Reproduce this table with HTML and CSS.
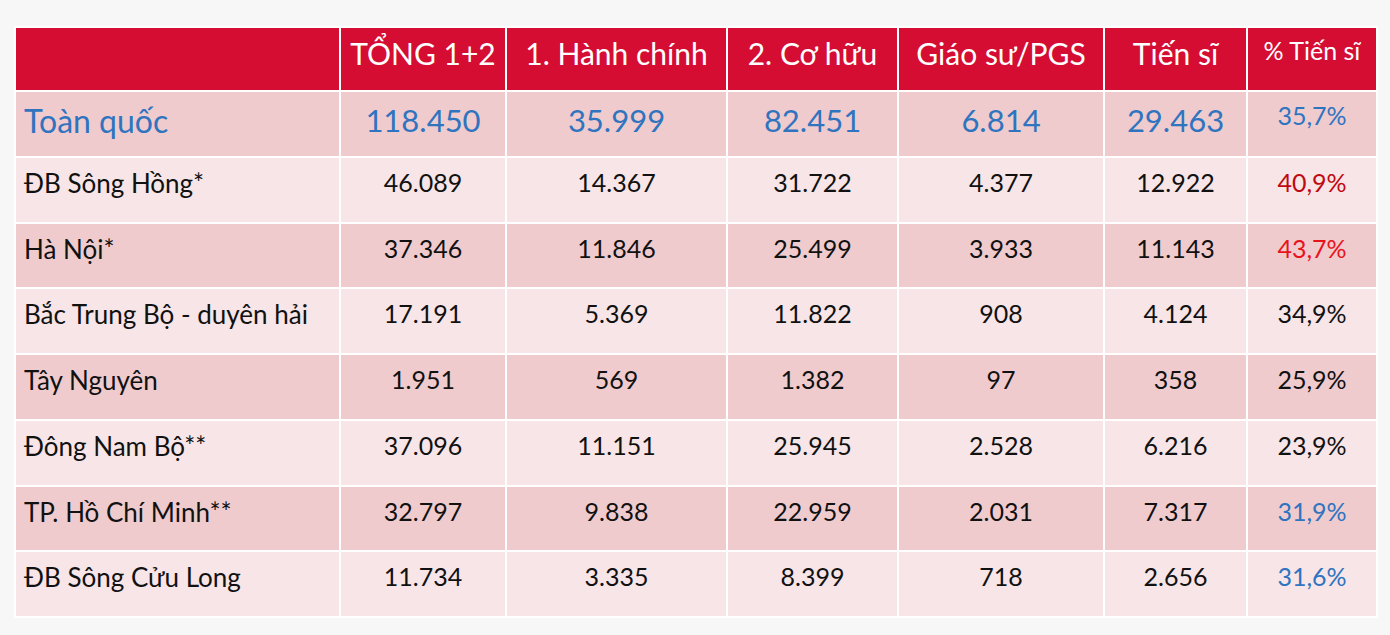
FILE: index.html
```html
<!DOCTYPE html>
<html lang="vi">
<head>
<meta charset="utf-8">
<link rel="stylesheet" href="styles.css">
</head>
<body>
<table class="stats">
  <colgroup>
    <col class="c-name"><col class="c-total"><col class="c-admin"><col class="c-staff"><col class="c-prof"><col class="c-phd"><col class="c-pct">
  </colgroup>
  <thead>
    <tr class="head">
      <th></th>
      <th>TỔNG 1+2</th>
      <th>1. Hành chính</th>
      <th>2. Cơ hữu</th>
      <th>Giáo sư/PGS</th>
      <th>Tiến sĩ</th>
      <th class="pct-head">% Tiến sĩ</th>
    </tr>
  </thead>
  <tbody>
    <tr class="total dark">
      <td class="name">Toàn quốc</td><td>118.450</td><td>35.999</td><td>82.451</td><td>6.814</td><td>29.463</td><td class="pct">35,7%</td>
    </tr>
    <tr class="light">
      <td class="name">ĐB Sông Hồng*</td><td>46.089</td><td>14.367</td><td>31.722</td><td>4.377</td><td>12.922</td><td class="pct darkred">40,9%</td>
    </tr>
    <tr class="dark">
      <td class="name">Hà Nội*</td><td>37.346</td><td>11.846</td><td>25.499</td><td>3.933</td><td>11.143</td><td class="pct red">43,7%</td>
    </tr>
    <tr class="light">
      <td class="name">Bắc Trung Bộ - duyên hải</td><td>17.191</td><td>5.369</td><td>11.822</td><td>908</td><td>4.124</td><td class="pct">34,9%</td>
    </tr>
    <tr class="dark">
      <td class="name">Tây Nguyên</td><td>1.951</td><td>569</td><td>1.382</td><td>97</td><td>358</td><td class="pct">25,9%</td>
    </tr>
    <tr class="light">
      <td class="name">Đông Nam Bộ**</td><td>37.096</td><td>11.151</td><td>25.945</td><td>2.528</td><td>6.216</td><td class="pct">23,9%</td>
    </tr>
    <tr class="dark">
      <td class="name">TP. Hồ Chí Minh**</td><td>32.797</td><td>9.838</td><td>22.959</td><td>2.031</td><td>7.317</td><td class="pct blue">31,9%</td>
    </tr>
    <tr class="light">
      <td class="name">ĐB Sông Cửu Long</td><td>11.734</td><td>3.335</td><td>8.399</td><td>718</td><td>2.656</td><td class="pct blue">31,6%</td>
    </tr>
  </tbody>
</table>
</body>
</html>
```
FILE: styles.css
```css
html, body {
  margin: 0;
  padding: 0;
  background: #f7f7f7;
}
body {
  padding: 26px 0 0 14px;
  font-family: "Lato", "Open Sans", sans-serif;
  color: #111;
}
.stats {
  border-collapse: collapse;
  table-layout: fixed;
  width: 1362px;
}
.c-name { width: 325px; }
.c-total { width: 166px; }
.c-admin { width: 221px; }
.c-staff { width: 171px; }
.c-prof { width: 206px; }
.c-phd { width: 143px; }
.c-pct { width: 130px; }

.stats th, .stats td {
  border: 2px solid #ffffff;
  text-align: center;
  vertical-align: top;
  padding: 0;
  white-space: nowrap;
  overflow: hidden;
}
.stats th {
  background: #d50d33;
  color: #ffffff;
  font-weight: 400;
  font-size: 30px;
  height: 64px;
  padding-top: 7px;
  box-sizing: border-box;
}
.stats th.pct-head {
  font-size: 25px;
  padding-top: 7px;
}
.stats td {
  font-size: 25px;
  height: 65.75px;
  padding-top: 9px;
  box-sizing: border-box;
}
.stats td.name {
  text-align: left;
  padding-left: 8px;
  font-size: 26px;
}
.dark td { background: #efcbce; }
.light td { background: #f7e5e7; }

.total td {
  color: #2f74bf;
  font-size: 31px;
  padding-top: 9px;
}
.total td.name {
  font-size: 32px;
}
.total td.pct {
  font-size: 25px;
  padding-top: 8px;
}
.pct.darkred { color: #c00a12; }
.pct.red { color: #e8141c; }
.pct.blue { color: #2f74bf; }
```
